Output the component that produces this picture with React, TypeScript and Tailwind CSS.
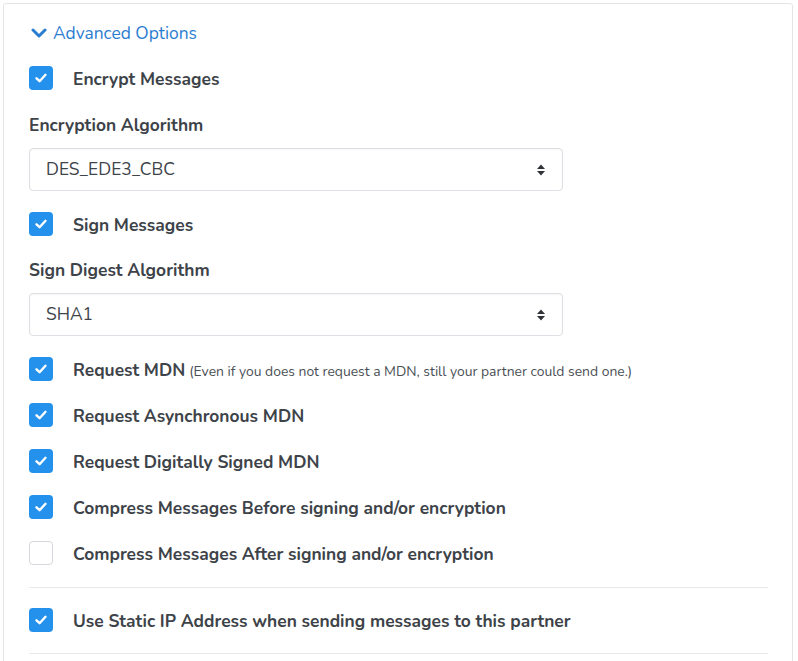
import React from "react";

function CheckBox({ checked }: { checked: boolean }) {
    if (!checked) {
        return <span className="w-6 h-6 shrink-0 rounded-[4px] border border-[#d4d7db] bg-white" />;
    }
    return (
        <span className="w-6 h-6 shrink-0 rounded-[4px] bg-[#2491ec] flex items-center justify-center">
            <svg width="14" height="14" viewBox="0 0 14 14" fill="none">
                <path d="M2.5 7.3 L5.6 10.2 L11.5 3.8" stroke="white" strokeWidth="2.4" strokeLinecap="round" strokeLinejoin="round" />
            </svg>
        </span>
    );
}

function CheckRow({ checked, label, note }: { checked: boolean; label: string; note?: string }) {
    return (
        <div className="flex items-center gap-5 h-6">
            <CheckBox checked={checked} />
            <span className="text-[17.4px] font-bold text-[#3d4349] whitespace-nowrap translate-y-[1px]">
                {label}
                {note && <span className="ml-1 text-[13.9px] font-normal text-[#4a4f55]">{note}</span>}
            </span>
        </div>
    );
}

function SelectBox({ value }: { value: string }) {
    return (
        <div className="w-[534px] h-[43px] border border-[#dcdfe3] rounded-[4px] bg-white flex items-center justify-between pl-4 pr-4 shadow-[inset_0_1px_2px_rgba(0,0,0,0.04)]">
            <span className="text-[17.4px] text-[#3d4349]">{value}</span>
            <svg width="10" height="14" viewBox="0 0 10 14">
                <path d="M1 6 L5 1.5 L9 6 Z" fill="#2f3338" />
                <path d="M1 8 L5 12.5 L9 8 Z" fill="#2f3338" />
            </svg>
        </div>
    );
}

export default function App() {
    return (
        <div className="w-[798px] h-[661px] bg-white pt-[3px] pl-[3px] overflow-hidden" style={{ fontFamily: "Nunito, Lato, 'Open Sans', sans-serif" }}>
            <div className="w-[790px] h-[700px] border border-[#e2e4e7] rounded-[3px] pl-[25px] pt-[17px]">
                {/* Titel */}
                <div className="flex items-center gap-[6px] h-6 text-[17.4px] text-[#2a7ccf]">
                    <svg width="16" height="12" viewBox="0 0 16 12" className="ml-[2px]">
                        <path d="M2 3 L8 9 L14 3" stroke="#2a7ccf" strokeWidth="3" fill="none" strokeLinecap="round" strokeLinejoin="round" />
                    </svg>
                    <span>Advanced Options</span>
                </div>

                <div className="mt-[21px]">
                    <CheckRow checked label="Encrypt Messages" />
                </div>
                <div className="mt-[23px] h-6 flex items-center text-[17.4px] font-bold text-[#3d4349]">Encryption Algorithm</div>
                <div className="mt-[11px]">
                    <SelectBox value="DES_EDE3_CBC" />
                </div>

                <div className="mt-[21px]">
                    <CheckRow checked label="Sign Messages" />
                </div>
                <div className="mt-[22px] h-6 flex items-center text-[17.4px] font-bold text-[#3d4349]">Sign Digest Algorithm</div>
                <div className="mt-[11px]">
                    <SelectBox value="SHA1" />
                </div>

                <div className="mt-[21px] flex flex-col gap-[22px]">
                    <CheckRow checked label="Request MDN" note="(Even if you does not request a MDN, still your partner could send one.)" />
                    <CheckRow checked label="Request Asynchronous MDN" />
                    <CheckRow checked label="Request Digitally Signed MDN" />
                    <CheckRow checked label="Compress Messages Before signing and/or encryption" />
                    <CheckRow checked={false} label="Compress Messages After signing and/or encryption" />
                </div>

                <div className="mt-[22px] w-[739px] border-t border-[#e6e8eb]" />
                <div className="mt-[20px]">
                    <CheckRow checked label="Use Static IP Address when sending messages to this partner" />
                </div>
                <div className="mt-[21px] w-[739px] border-t border-[#e6e8eb]" />
            </div>
        </div>
    );
}
